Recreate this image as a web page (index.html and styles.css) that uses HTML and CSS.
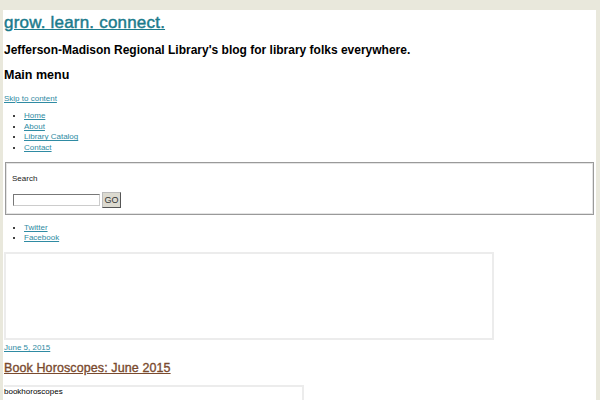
FILE: index.html
```html
<!DOCTYPE html>
<html>
<head>
<meta charset="utf-8">
<link rel="stylesheet" href="styles.css">
</head>
<body>
<div class="page">
  <header class="masthead">
    <h1 class="site-title"><a href="#">grow. learn. connect.</a></h1>
    <h2 class="tagline">Jefferson-Madison Regional Library's blog for library folks everywhere.</h2>
    <h3 class="menu-title">Main menu</h3>
    <a class="skip" href="#">Skip to content</a>
    <ul class="links nav">
      <li><a href="#">Home</a></li>
      <li><a href="#">About</a></li>
      <li><a href="#">Library Catalog</a></li>
      <li><a href="#">Contact</a></li>
    </ul>
  </header>
  <form class="search">
    <label class="search-label">Search</label>
    <div class="search-row">
      <input class="search-input" type="text">
      <button class="go" type="button">GO</button>
    </div>
  </form>
  <ul class="links social">
    <li><a href="#">Twitter</a></li>
    <li><a href="#">Facebook</a></li>
  </ul>
  <div class="banner"></div>
  <a class="date" href="#">June 5, 2015</a>
  <h2 class="post-title"><a href="#">Book Horoscopes: June 2015</a></h2>
  <div class="figure">bookhoroscopes</div>
</div>
</body>
</html>
```
FILE: styles.css
```css
html, body {
  margin: 0;
  padding: 0;
  background: #e9e8dc;
  height: 100%;
  overflow: hidden;
}
body {
  font-family: "Liberation Sans", Arial, sans-serif;
  color: #000;
}
.page {
  background: #fff;
  margin: 10px 4px 0 3px;
  padding: 0 2px 0 1px;
  min-height: 400px;
  display: flex;
  flex-direction: column;
  align-items: flex-start;
}
a { color: #2f8ba3; }
.masthead {
  display: flex;
  flex-direction: column;
  align-items: flex-start;
  align-self: stretch;
}
.site-title {
  margin: 2px 0 0;
  font-size: 17px;
  line-height: 22px;
  font-weight: normal;
  letter-spacing: 0.2px;
  -webkit-text-stroke: 0.45px currentColor;
}
.site-title a { color: #1b7b8c; }
.tagline {
  margin: 8px 0 0;
  font-size: 12px;
  line-height: 16px;
  font-weight: bold;
}
.menu-title {
  margin: 8px 0 0;
  font-size: 12.5px;
  line-height: 18px;
  font-weight: bold;
}
.skip {
  margin-top: 9px;
  font-size: 8px;
  line-height: 11px;
}
.links {
  margin: 7px 0 0;
  padding-left: 20px;
  font-size: 8px;
  line-height: 10.7px;
}
.links li {
  height: 10.7px;
  line-height: 10.7px;
}
.links li::marker { color: #000; }
.search {
  align-self: stretch;
  margin: 8px 0 0 1px;
  border: 1px solid #9a9a9a;
  box-shadow: inset 0 0 0 1px #e4e4e4;
  height: 51px;
  padding: 0 6px;
  display: flex;
  flex-direction: column;
}
.search-label {
  font-size: 8px;
  line-height: 11px;
  margin-top: 10px;
  color: #222;
}
.search-row {
  display: flex;
  align-items: center;
  gap: 2px;
  margin-top: 8px;
  padding-left: 1px;
}
.search-input {
  width: 87px;
  height: 12px;
  box-sizing: border-box;
  border: 1px solid #777;
  border-right-color: #ccc;
  border-bottom-color: #ccc;
  padding: 0;
  margin: 0;
}
.go {
  width: 19px;
  height: 16px;
  padding: 0;
  margin: 0;
  font-family: "Liberation Sans", Arial, sans-serif;
  font-size: 9px;
  color: #333;
  background: #dcdad0;
  border: 1px solid #bbb;
  border-right-color: #555;
  border-bottom-color: #555;
}
.social { margin-top: 8px; }
.banner {
  margin-top: 7.6px;
  width: 486px;
  height: 84px;
  border: 2px solid #ececec;
}
.date {
  margin-top: 2px;
  font-size: 8px;
  line-height: 11px;
}
.post-title {
  margin: 7px 0 0;
  font-size: 12.5px;
  line-height: 16px;
  font-weight: normal;
  letter-spacing: 0.1px;
  -webkit-text-stroke: 0.35px currentColor;
}
.post-title a { color: #7a4a2e; }
.figure {
  margin-top: 9px;
  width: 300px;
  height: 40px;
  box-sizing: border-box;
  border-top: 2px solid #ececec;
  border-right: 2px solid #ececec;
  font-size: 8px;
  line-height: 10px;
}
```
